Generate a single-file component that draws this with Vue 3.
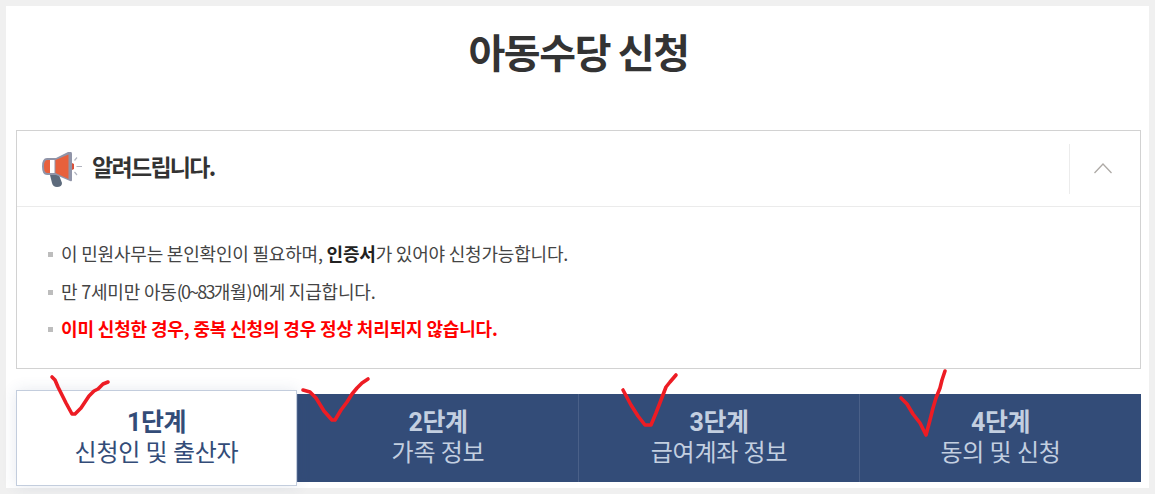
<script setup>
const steps = [
  { n: '1단계', t: '신청인 및 출산자', active: true },
  { n: '2단계', t: '가족 정보' },
  { n: '3단계', t: '급여계좌 정보' },
  { n: '4단계', t: '동의 및 신청' },
]
const checks = [
  'M52 377 L55 380 L58 387 L66 403 L72 414 L75 414 L81 408 L85 402 L89 396 L94 391 L98 389 L103 384 L108 382',
  'M303 390 L310 392 L316 398 L324 411 L332 420 L335 420 L341 410 L347 402 L352 394 L357 388 L362 383 L368 379',
  'M623 390 L631 405 L638 416 L645 425 L651 425 L656 413 L661 400 L666 387 L670 382 L676 375',
  'M901 398 L907 404 L913 414 L920 423 L926 435 L930 420 L933 408 L936 398 L940 388 L942 380 L945 371',
]
</script>

<template>
  <div class="page">
    <main class="panel">
      <h1 class="title">아동수당 신청</h1>
      <section class="notice">
        <header class="notice-head">
          <div class="notice-title">
            <svg class="horn" viewBox="42 150 40 40" width="40" height="40">
              <path d="M50 175 H59 L62 183 Q62 187 57 187 Q53 187 52 183 Z" fill="#5d6b7c" />
              <path d="M47 158 H56 L68 152 H71 Q72 152 72 154 V180 Q72 182 70 181 L56 175 H47 Q42 175 42 166.5 Q42 158 47 158 Z" fill="#9094a8" />
              <path d="M47 160 H50 V173 H47 Q44 173 44 166.5 Q44 160 47 160 Z" fill="#e8603c" />
              <path d="M50 160 H54.5 V173 H50 Z" fill="#ffffff" />
              <path d="M55.5 160 L68.5 154.5 V179 L55.5 173 Z" fill="#e8603c" />
              <path d="M72 163 L74 164 V169 L72 170 Z" fill="#d9503a" />
              <path d="M77 157.5 L74.5 160.5 M76.5 166.5 H82 M77 175 L74.5 172" stroke="#b1b4bf" stroke-width="1.2" fill="none" />
            </svg>
            <span class="notice-label">알려드립니다.</span>
          </div>
          <button class="toggle" type="button" aria-label="접기">
            <svg viewBox="0 0 18 11" width="18" height="11">
              <path d="M0.5 10 L9 1 L17.5 10" fill="none" stroke="#aeaaa6" stroke-width="1.3" />
            </svg>
          </button>
        </header>
        <ul class="notice-list">
          <li>이 민원사무는 본인확인이 필요하며, <b>인증서</b>가 있어야 신청가능합니다.</li>
          <li>만 7세미만 아동<span class="tight">(0~83</span>개월)에게 지급합니다.</li>
          <li class="warn">이미 신청한 경우, 중복 신청의 경우 정상 처리되지 않습니다.</li>
        </ul>
      </section>
      <nav class="steps">
        <div v-for="s in steps" :key="s.n" class="step" :class="{ active: s.active }">
          <strong>{{ s.n }}</strong>
          <span>{{ s.t }}</span>
        </div>
      </nav>
    </main>
    <svg class="marks" width="1155" height="494" viewBox="0 0 1155 494">
      <path v-for="(d, i) in checks" :key="i" :d="d" fill="none" stroke="#ed1c24" stroke-width="3.6" stroke-linejoin="round" stroke-linecap="round" />
    </svg>
  </div>
</template>

<style scoped>
.page {
  position: relative;
  width: 1155px;
  height: 494px;
  box-sizing: border-box;
  padding: 6px;
  background: #f0f0f0;
  overflow: hidden;
  font-family: "Noto Sans CJK KR", "Noto Sans", sans-serif;
  color: #333;
}
.panel {
  width: 1143px;
  height: 482px;
  box-sizing: border-box;
  padding: 0 8px 0 10px;
  background: #fff;
}
.title {
  margin: 0;
  height: 124px;
  padding-top: 15px;
  box-sizing: border-box;
  text-align: center;
  font-size: 40px;
  line-height: 60px;
  font-weight: 700;
  letter-spacing: -1.4px;
  color: #333;
}
.notice {
  width: 1125px;
  height: 239px;
  box-sizing: border-box;
  border: 1px solid #d2d2d2;
}
.notice-head {
  display: flex;
  align-items: center;
  justify-content: space-between;
  height: 76px;
  box-sizing: border-box;
  border-bottom: 1px solid #ebebeb;
}
.notice-title {
  display: flex;
  align-items: center;
  gap: 10px;
  padding-left: 25px;
  font-size: 23px;
  font-weight: 700;
  letter-spacing: -1.7px;
  color: #333;
}
.horn {
  display: block;
  margin-top: 3px;
}
.notice-label { margin-top: -6px; }
.toggle {
  display: flex;
  align-items: center;
  justify-content: center;
  width: 71px;
  height: 50px;
  padding: 0 5px 0 0;
  box-sizing: border-box;
  background: none;
  border: 0;
  border-left: 1px solid #ececec;
}
.notice-list {
  list-style: none;
  margin: 0;
  padding: 28px 0 0 30px;
  font-size: 18px;
  letter-spacing: -0.2px;
  line-height: 37.5px;
  color: #444;
}
.notice-list li {
  position: relative;
  padding-left: 14px;
}
.notice-list li::before {
  content: "";
  position: absolute;
  left: 1px;
  top: 17px;
  width: 5px;
  height: 5px;
  background: #bdbdbd;
}
.notice-list b { font-weight: 700; color: #222; }
.tight { letter-spacing: -1.8px; }
.warn { color: #f00; font-weight: 700; letter-spacing: -0.15px; }
.steps {
  display: grid;
  grid-template-columns: 281px 281px 281px 282px;
  margin-top: 25px;
  width: 1125px;
  height: 88px;
  background: #334c78;
  position: relative;
}
.step {
  display: flex;
  flex-direction: column;
  align-items: center;
  justify-content: center;
  box-sizing: border-box;
  border-left: 1px solid #4a6088;
  color: #c3cfe0;
  padding-bottom: 1px;
  font-family: Roboto, "Noto Sans CJK KR", sans-serif;
}
.step:first-child { border-left: 0; }
.step strong {
  font-size: 25px;
  line-height: 30px;
  font-weight: 700;
  letter-spacing: -0.5px;
}
.step span {
  font-size: 24px;
  line-height: 30px;
  letter-spacing: -0.3px;
}
.step.active {
  position: relative;
  margin: -4px 0;
  background: #fff;
  border: 1px solid #c3cddd;
  color: #334c78;
  box-shadow: 0 0 14px rgba(51, 76, 120, 0.12);
}
.marks {
  position: absolute;
  left: 0;
  top: 0;
  pointer-events: none;
}
</style>
